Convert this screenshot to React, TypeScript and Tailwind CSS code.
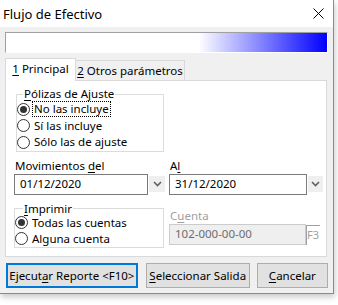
import React from "react";

const font = { fontFamily: '"Noto Sans", "Liberation Sans", sans-serif' };

function U({ children }: { children: React.ReactNode }) {
  return <span className="underline underline-offset-[2px] decoration-1">{children}</span>;
}

function Radio({
  checked = false,
  focused = false,
  children,
  rowClass = "h-[16.5px]",
}: {
  checked?: boolean;
  focused?: boolean;
  children: React.ReactNode;
  rowClass?: string;
}) {
  return (
    <div className={"flex items-center whitespace-nowrap " + rowClass}>
      <span className="w-[13px] h-[13px] shrink-0 rounded-full border border-[#333333] bg-white flex items-center justify-center">
        {checked && <span className="w-[7px] h-[7px] rounded-full bg-[#333333]" />}
      </span>
      <span
        className={
          "ml-[2px] px-[1px] leading-[14px] " +
          (focused ? "border border-dotted border-black" : "border border-transparent")
        }
      >
        {children}
      </span>
    </div>
  );
}

function Chevron() {
  return (
    <svg width="9" height="6" viewBox="0 0 9 6">
      <path d="M1 1 L4.5 4.5 L8 1" fill="none" stroke="#606060" strokeWidth="1.6" />
    </svg>
  );
}

function DateField({ value, inputW, btnW }: { value: string; inputW: string; btnW: string }) {
  return (
    <div className="flex items-center h-[21px]">
      <div className={"h-[21px] border border-[#7a7a7a] bg-white pl-[5px] flex items-center leading-[14px] " + inputW}>
        {value}
      </div>
      <div className={"h-[16px] ml-[1px] bg-[#efefef] flex items-center justify-center " + btnW}>
        <Chevron />
      </div>
    </div>
  );
}

export default function App() {
  return (
    <div className="w-[338px] h-[305px] bg-white text-[11.5px] text-black whitespace-nowrap" style={font}>
      <div className="w-[334px] h-[294px] flex flex-col border-r border-b border-[#8a8a8a] shadow-[1px_3px_6px_rgba(0,0,0,0.22)]">
        {/* title bar */}
        <div className="h-[27px] bg-white flex items-center justify-between pl-[3px] pr-[9px]">
          <span className="text-[13px] leading-[16px]">Flujo de Efectivo</span>
          <svg width="11" height="11" viewBox="0 0 11 11">
            <path d="M0.5 0.5 L10.5 10.5 M10.5 0.5 L0.5 10.5" stroke="#000" strokeWidth="1" />
          </svg>
        </div>

        <div className="flex-1 bg-[#f0f0f0] px-[5px] pt-[5px]">
          {/* progress bar */}
          <div className="w-[323px] h-[21px] border-t border-l border-[#a0a0a0] border-b border-r border-b-white border-r-white bg-[linear-gradient(to_right,#ffffff_60%,#0000ff)]" />

          {/* tabs */}
          <div className="mt-[5px] h-[22px] flex items-end">
            <div className="relative z-10 w-[71px] h-[23px] -mb-[1px] bg-white border-t border-x border-[#d9d9d9] flex items-center justify-center pb-[2px]">
              <span className="leading-[14px]">
                <U>1</U> Principal
              </span>
            </div>
            <div className="w-[109px] h-[20px] bg-[#f0f0f0] border-t border-r border-[#d9d9d9] flex items-center justify-center">
              <span className="leading-[14px]">
                <U>2</U> Otros parámetros
              </span>
            </div>
          </div>

          {/* panel */}
          <div className="w-[322px] h-[177px] bg-white border border-[#d9d9d9] pl-[8px]">
            <fieldset className="ml-[2px] mt-[6px] w-[148px] border border-[#dcdcdc]">
              <legend className="ml-[6px] px-[1px] leading-[14px]">
                <U>P</U>ólizas de Ajuste
              </legend>
              <Radio checked focused>
                No las incluye
              </Radio>
              <Radio>Sí las incluye</Radio>
              <Radio>Sólo las de ajuste</Radio>
            </fieldset>

            <div className="flex mt-[7px]">
              <div className="w-[155px]">
                <div className="leading-[14px] h-[14px] pl-[1px]">
                  Movimientos <U>d</U>el
                </div>
                <div className="mt-[1px]">
                  <DateField value="01/12/2020" inputW="w-[134px]" btnW="w-[16px]" />
                </div>
              </div>
              <div>
                <div className="leading-[14px] h-[14px] pl-[1px]">
                  A<U>l</U>
                </div>
                <div className="mt-[1px]">
                  <DateField value="31/12/2020" inputW="w-[138px]" btnW="w-[15px]" />
                </div>
              </div>
            </div>

            <div className="flex mt-[8px]">
              <fieldset className="w-[150px] border border-[#dcdcdc]">
                <legend className="ml-[8px] px-[1px] leading-[12px]">
                  <U>I</U>mprimir
                </legend>
                <Radio checked rowClass="h-[16px]">
                  Todas las cuentas
                </Radio>
                <Radio rowClass="h-[16px]">Alguna cuenta</Radio>
              </fieldset>
              <div className="ml-[5px] mt-[6px]">
                <div className="leading-[14px] h-[14px] pl-[1px] text-[#a0a0a0]">
                  C<U>u</U>enta
                </div>
                <div className="mt-[1px] flex h-[21px]">
                  <div className="w-[137px] h-[21px] border border-[#cccccc] bg-[#efefef] text-[#6d6d6d] pl-[5px] flex items-center leading-[14px]">
                    102-000-00-00
                  </div>
                  <div className="w-[14px] h-[20px] mt-[1px] border-l border-t border-[#a0a0a0] text-[#a0a0a0] text-[11px] flex items-center leading-[14px]">
                    F3
                  </div>
                </div>
              </div>
            </div>
          </div>

          {/* buttons */}
          <div className="mt-[6px] ml-[1px] flex gap-[8px]">
            <button className="w-[133px] h-[25px] px-0 bg-[#e1e1e1] border-2 border-[#0078d7] leading-[14px] flex items-center justify-center">
              <span>
                Ejecut<U>a</U>r Reporte &lt;F10&gt;
              </span>
            </button>
            <button className="w-[105px] h-[25px] bg-[#e1e1e1] border border-[#adadad] leading-[14px]">
              <U>S</U>eleccionar Salida
            </button>
            <button className="w-[72px] h-[25px] -ml-[1px] bg-[#e1e1e1] border border-[#adadad] leading-[14px]">
              <U>C</U>ancelar
            </button>
          </div>
        </div>
      </div>
    </div>
  );
}
